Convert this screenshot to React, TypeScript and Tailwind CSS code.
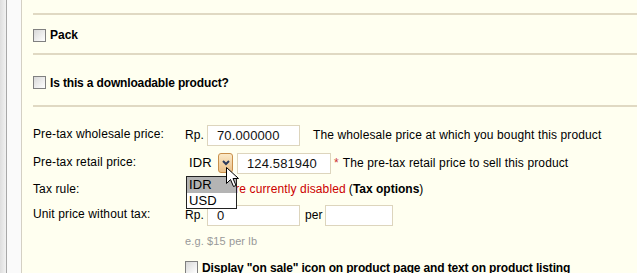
import { ReactNode } from "react";

const font = { fontFamily: '"Liberation Sans", Arial, sans-serif' };

const Checkbox = () => (
    <span className="inline-block w-[13px] h-[13px] shrink-0 border border-[#808080] bg-gradient-to-br from-[#d8d8d8] to-[#ffffff]" />
);

const TextBox = ({ value, w }: { value: string; w: string }) => (
    <div className={`${w} h-[21px] border border-[#ddd5bd] bg-white px-[9px] text-[13px] leading-[19px] text-[#111]`}>
        {value}
    </div>
);

const Row = ({ label, h, lift = true, children }: { label: string; h: string; lift?: boolean; children: ReactNode }) => (
    <div className={`flex items-center ${h}`}>
        <div className={`w-[152px] shrink-0 ${lift ? "-mt-[3px]" : ""}`}>{label}</div>
        <div className="flex items-center">{children}</div>
    </div>
);

const Cursor = () => (
    <svg width="13" height="21" viewBox="0 0 13 21" className="absolute left-[226px] top-[167px]">
        <path d="M0.5 0.5 L0.5 16.5 L4.5 12.5 L7.5 19.5 L10 18.5 L7 11.5 L12.5 11.5 Z" fill="#fff" stroke="#000" strokeWidth="1" />
    </svg>
);

export default function App() {
    return (
        <div className="relative flex w-[637px] h-[273px] overflow-hidden bg-[#fffff0] text-[12px] tracking-[0.12px] text-black" style={font}>
            {/* left gutter */}
            <div className="w-[6px] shrink-0 bg-gradient-to-r from-[#dedede] to-[#f2f2f2]" />
            <div className="w-[15px] shrink-0 border-l border-[#a8a8a8] bg-[#fafafa]" />
            <div className="flex-1 border-l border-[#d4d0c4] pl-[11px]">
                <div className="h-[15px] border-b-2 border-[#e0d9c3]" />

                <div className="h-[40px] flex items-center gap-[4px] border-b-2 border-[#e0d9c3] pt-[2px]">
                    <Checkbox />
                    <span className="font-bold tracking-normal">Pack</span>
                </div>

                <div className="h-[52px] flex items-center gap-[4px] border-b-2 border-[#e0d9c3] pt-[5px]">
                    <Checkbox />
                    <span className="font-bold tracking-[-0.15px]">Is this a downloadable product?</span>
                </div>

                <div className="pt-[16px] flex flex-col">
                    <Row label="Pre-tax wholesale price:" h="h-[24px]">
                        <span className="w-[22px]">Rp.</span>
                        <TextBox value="70.000000" w="w-[93px]" />
                        <span className="ml-[13px]">The wholesale price at which you bought this product</span>
                    </Row>
                    <div className="h-[4px]" />
                    <Row label="Pre-tax retail price:" h="h-[24px]">
                        <div className="flex items-center w-[48px] h-[21px]">
                            <span className="text-[13px] pl-[4px] w-[33px]">IDR</span>
                            <div className="w-[15px] h-[20px] rounded-[3px] border border-[#c98f4a] bg-gradient-to-b from-[#fbe9c7] to-[#e9c089] flex items-center justify-center">
                                <svg width="8" height="6" viewBox="0 0 8 6">
                                    <path d="M1 1 L4 4 L7 1" fill="none" stroke="#2b3b5c" strokeWidth="2" />
                                </svg>
                            </div>
                        </div>
                        <div className="ml-[4px]">
                            <TextBox value="124.581940" w="w-[94px]" />
                        </div>
                        <span className="ml-[3px] text-[#cc3333]">*</span>
                        <span className="ml-[4px]">The pre-tax retail price to sell this product</span>
                    </Row>
                    <Row label="Tax rule:" h="h-[28px]" lift={false}>
                        <span className="ml-[8px] text-[#cc0000]">Taxes are currently disabled</span>
                        <span className="ml-[3px]">(</span>
                        <span className="font-bold tracking-normal">Tax options</span>
                        <span>)</span>
                    </Row>
                    <Row label="Unit price without tax:" h="h-[24px]">
                        <span className="w-[22px]">Rp.</span>
                        <TextBox value="0" w="w-[93px]" />
                        <span className="ml-[5px] w-[20px]">per</span>
                        <TextBox value="" w="w-[68px]" />
                    </Row>
                    <div className="pl-[152px] pt-[6px] text-[11px] text-[#999]">e.g. $15 per lb</div>
                    <div className="pl-[152px] pt-[9px] flex items-center gap-[4px]">
                        <Checkbox />
                        <span className="font-bold tracking-[-0.15px]">Display "on sale" icon on product page and text on product listing</span>
                    </div>
                </div>
            </div>

            {/* open select list */}
            <div className="absolute left-[186px] top-[176px] w-[51px] border border-[#222] bg-white text-[13px] leading-[15px]">
                <div className="bg-[#b4b4b4] pl-[2px] h-[16px]">IDR</div>
                <div className="pl-[2px] h-[15px]">USD</div>
            </div>
            <Cursor />
        </div>
    );
}
